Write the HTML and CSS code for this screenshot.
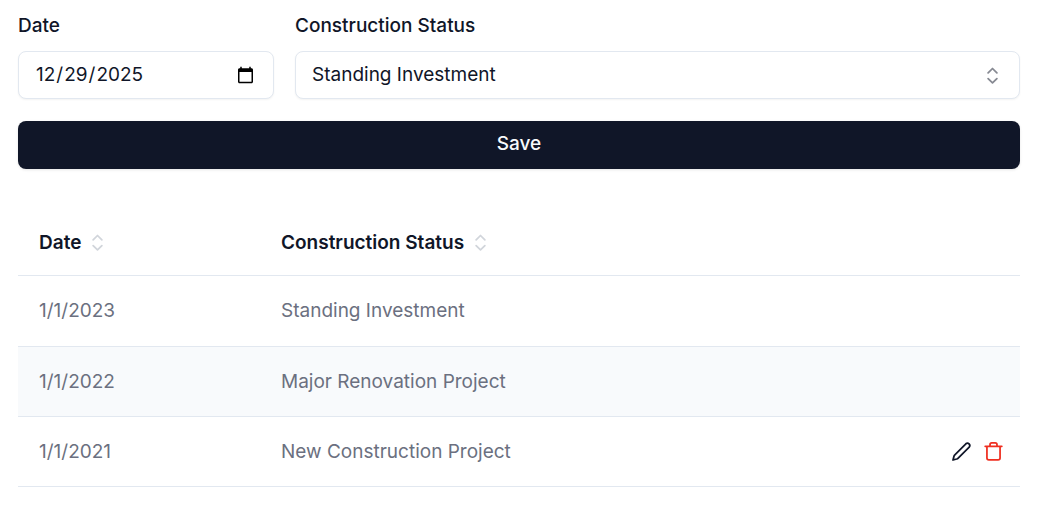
FILE: index.html
```html
<!DOCTYPE html>
<html lang="en">
<head>
<meta charset="utf-8">
<title>Construction Status</title>
<link rel="stylesheet" href="styles.css">
</head>
<body>
<svg class="sprite" aria-hidden="true">
  <symbol id="sort" viewBox="0 0 24 24"><path d="m7 15.500 5 5 5-5M7 9l5-5 5 5"/></symbol>
</svg>
<main class="page">
  <form class="form">
    <div class="field">
      <label class="label" for="date">Date</label>
      <input class="control" id="date" type="date" value="2025-12-29">
    </div>
    <div class="field">
      <label class="label" for="status">Construction Status</label>
      <div class="select">
        <select class="control" id="status">
          <option>Standing Investment</option>
          <option>Major Renovation Project</option>
          <option>New Construction Project</option>
        </select>
        <svg class="icon select-icon" aria-hidden="true"><use href="#sort"/></svg>
      </div>
    </div>
    <button class="save" type="button">Save</button>
  </form>

  <table class="table">
    <thead>
      <tr>
        <th class="date-column" scope="col"><button class="sort" type="button">Date <svg class="icon sort-icon" aria-hidden="true"><use href="#sort"/></svg></button></th>
        <th scope="col"><button class="sort" type="button">Construction Status <svg class="icon sort-icon" aria-hidden="true"><use href="#sort"/></svg></button></th>
        <td class="actions-column"></td>
      </tr>
    </thead>
    <tbody>
      <tr><td>1/1/2023</td><td>Standing Investment</td><td></td></tr>
      <tr><td>1/1/2022</td><td>Major Renovation Project</td><td></td></tr>
      <tr>
        <td>1/1/2021</td>
        <td>New Construction Project</td>
        <td class="actions-column">
          <div class="actions">
            <button class="action" type="button" aria-label="Edit"><svg class="icon" viewBox="0 0 24 24"><path d="M17 3.2a2.7 2.7 0 0 1 3.8 3.8L8.2 19.6q-.7.7-1.700 1L2.300 21.700l1.100-4.200q.3-1 1-1.700Z"/></svg></button>
            <button class="action danger" type="button" aria-label="Delete"><svg class="icon" viewBox="0 0 24 24"><path d="M2.500 6h19M4.500 6v13.500a2.200 2.200 0 0 0 2.200 2.200h10.600a2.200 2.200 0 0 0 2.200-2.200V6M8 6V4.200a2 2 0 0 1 2-2h4a2 2 0 0 1 2 2V6"/></svg></button>
          </div>
        </td>
      </tr>
    </tbody>
  </table>
</main>
</body>
</html>
```
FILE: styles.css
```css
* { box-sizing: border-box; }

body {
  margin: 0;
  background: #fff;
  color: #101628;
  font: 400 19px/28px Inter, sans-serif;
}

button, input, select { font: inherit; color: inherit; }
button { cursor: pointer; }

.sprite { display: none; }

.icon {
  display: block;
  width: 21px;
  height: 21px;
  fill: none;
  stroke: currentColor;
  stroke-width: 2;
  stroke-linecap: round;
  stroke-linejoin: round;
}

.page { padding: 12px 20px 20px 18px; }

.form {
  display: grid;
  grid-template-columns: 256px 1fr;
  gap: 22px 21px;
}

.field {
  display: flex;
  flex-direction: column;
  gap: 11px;
}

.label { font-weight: 500; }

.control {
  display: block;
  width: 100%;
  height: 48px;
  padding: 0 16px;
  border: 1px solid #e2e8f0;
  border-radius: 8px;
  background: #fff;
  box-shadow: 0 1px 2px rgb(0 0 0 / 5%);
  appearance: none;
}

.select { display: grid; align-items: center; }
.select > * { grid-area: 1 / 1; }
.select-icon {
  justify-self: end;
  margin-right: 17px;
  opacity: .5;
  pointer-events: none;
}

.save {
  grid-column: 1 / -1;
  height: 48px;
  padding: 0 16px 2px;
  border: 0;
  border-radius: 8px;
  background: #101628;
  color: #f8fafc;
  font-weight: 500;
  box-shadow: 0 1px 3px rgb(0 0 0 / 10%);
}

.table {
  width: 100%;
  margin-top: 41px;
  border-collapse: separate;
  border-spacing: 0;
  color: #6b7080;
}

.table th, .table td {
  height: 70px;
  padding: 0 21px;
  border-bottom: 1px solid #e2e8f0;
  text-align: left;
}

.table thead th, .table thead td { height: 66px; }
.table tbody tr:first-child td { height: 71px; }
.table tbody tr:nth-child(even) { background: #f8fafc; }
.table .date-column { width: 242px; }
.table .actions-column { width: 110px; padding: 0 16px; }

.sort {
  display: flex;
  align-items: center;
  gap: 6px;
  padding: 0;
  border: 0;
  background: none;
  color: #101628;
  font-weight: 600;
}

.sort-icon { color: #d1d5db; }

.actions {
  display: flex;
  justify-content: flex-end;
  gap: 11px;
}

.action {
  padding: 0;
  border: 0;
  background: none;
  color: #101628;
}

.danger { color: #ef2f20; }
```
